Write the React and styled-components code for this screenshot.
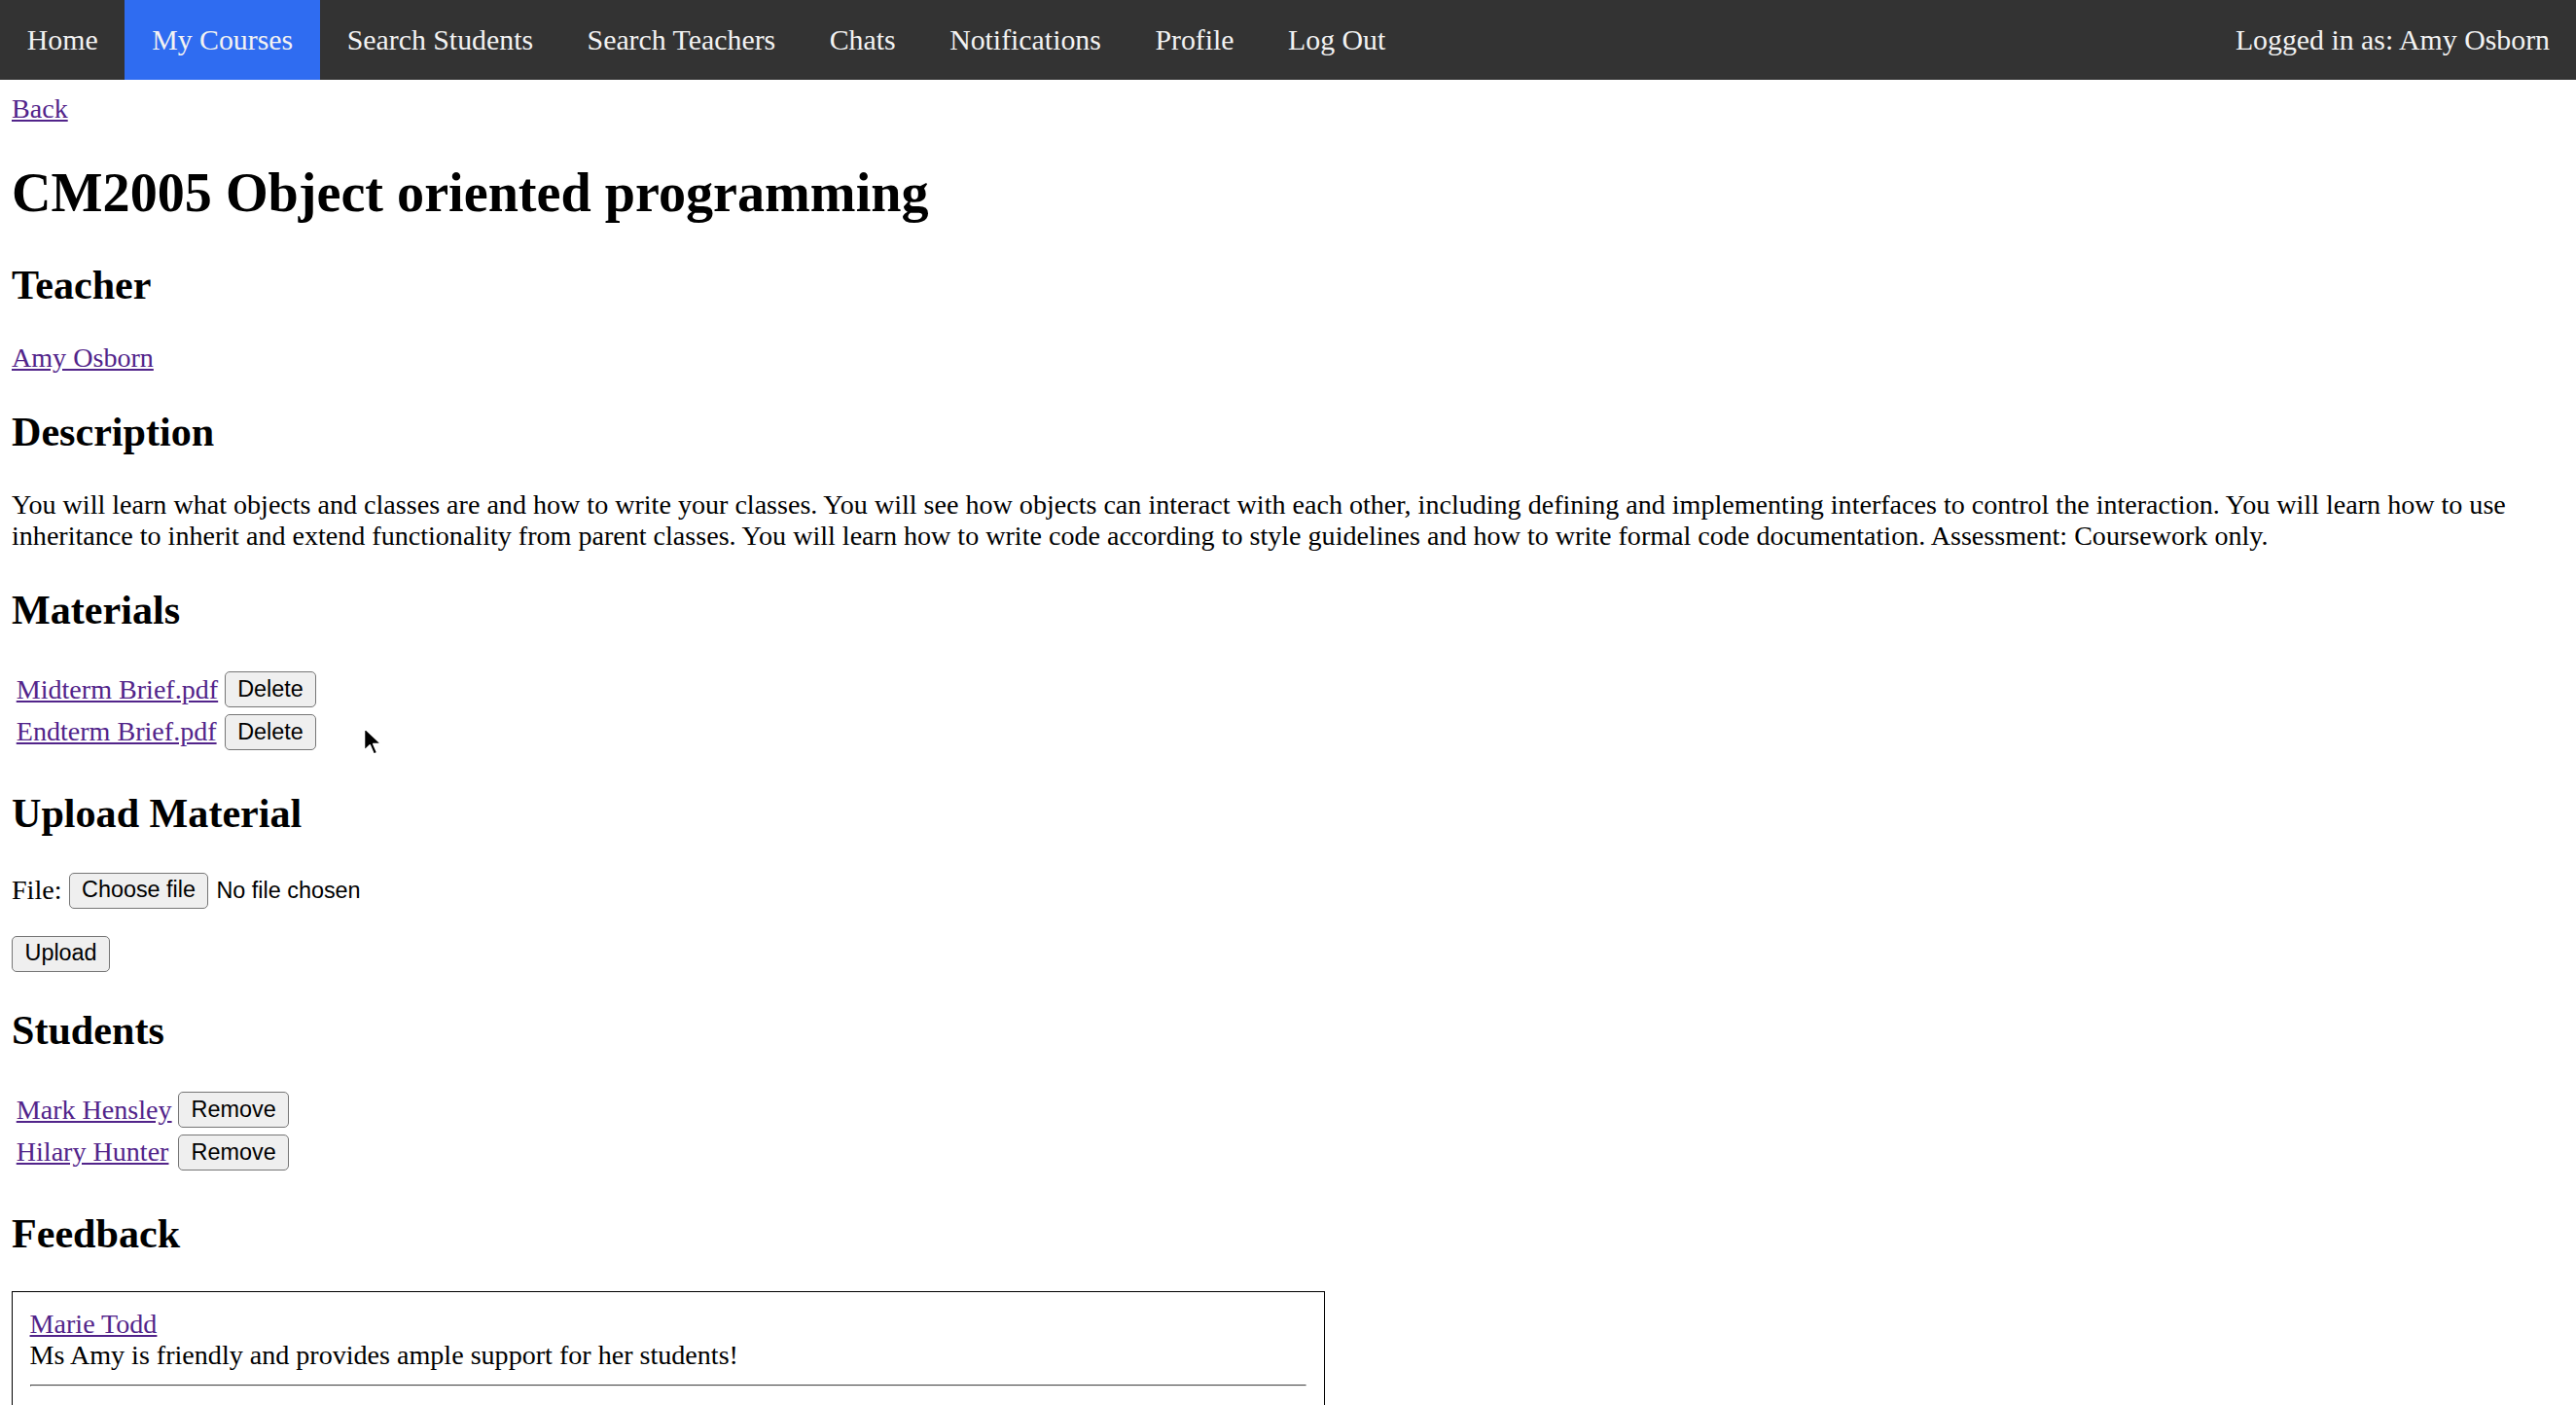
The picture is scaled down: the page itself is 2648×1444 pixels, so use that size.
import React from "react";
import styled, { createGlobalStyle } from "styled-components";

const S = 1.755;
const u = (n) => `${+(n * S).toFixed(2)}px`;

const GlobalStyle = createGlobalStyle`
  html, body { margin: 0; padding: 0; background: #fff; }
  body {
    font-family: "Liberation Serif", "Times New Roman", serif;
    font-size: ${u(16)};
    color: #000;
  }
`;

const Page = styled.div`
  position: relative;
  min-height: 100vh;
`;

const TopNav = styled.nav`
  display: flex;
  align-items: stretch;
  background: #333;
`;

const NavItem = styled.a`
  display: block;
  padding: ${u(13.8)} 27.75px;
  font-size: ${u(17)};
  color: #f2f2f2;
  text-decoration: none;
  background: ${(p) => (p.$active ? "#2f6cf1" : "transparent")};
`;

const UserInfo = styled.span`
  margin-left: auto;
  padding: ${u(13.8)} 27px;
  font-size: ${u(17)};
  color: #f2f2f2;
`;

const Main = styled.main`
  padding: ${u(8)} 12px;
`;

const Link = styled.a`
  color: #52248a;
  text-decoration: underline;
  cursor: pointer;
`;

const BlockLink = styled(Link)`
  display: block;
`;

const Title = styled.h1`
  font-size: ${u(32)};
  font-weight: bold;
  margin: ${u(21.44)} 0;
`;

const SectionTitle = styled.h2`
  font-size: ${u(24)};
  font-weight: bold;
  margin: ${u(19.92)} 0;
`;

const Para = styled.p`
  margin: ${u(16)} 0;
`;

const FileRow = styled(Para)`
  padding-top: 2px;
`;

const ItemTable = styled.table`
  border-collapse: separate;
  border-spacing: ${u(2)};
`;

const Cell = styled.td`
  padding: ${u(1)};
  vertical-align: middle;
`;

const buttonLook = `
  box-sizing: border-box;
  height: 37px;
  font-family: "Liberation Sans", Arial, Helvetica, sans-serif;
  font-size: ${u(13.33)};
  line-height: 1;
  padding: 0 12.5px;
  border: 1.75px solid #767676;
  border-radius: 5px;
  background: #efefef;
  color: #000;
`;

const Button = styled.button`
  ${buttonLook}
  margin: 0;
  vertical-align: middle;
`;

const FileLabel = styled.label`
  display: inline-flex;
  align-items: center;
  font-size: ${u(16)};
`;

const HiddenInput = styled.input`
  display: none;
`;

const ChooseButton = styled.span`
  ${buttonLook}
  display: inline-flex;
  align-items: center;
  margin: 0 8px 0 0;
`;

const FileStatus = styled.span`
  font-family: "Liberation Sans", Arial, Helvetica, sans-serif;
  font-size: ${u(13.33)};
`;

const LabelText = styled.span`
  margin-right: ${u(4)};
`;

const FeedbackCard = styled.div`
  width: ${u(748)};
  padding: ${u(10)};
  border: ${u(1)} solid #000;
`;

const Divider = styled.hr`
  margin: ${u(8)} 0;
  border: ${u(1)} inset #eee;
  border-top-color: #9a9a9a;
  border-left-color: #9a9a9a;
  height: 0;
`;

const Cursor = styled.svg`
  position: absolute;
  left: 372px;
  top: 746px;
  width: 24px;
  height: 34px;
  pointer-events: none;
`;

const navItems = [
  "Home",
  "My Courses",
  "Search Students",
  "Search Teachers",
  "Chats",
  "Notifications",
  "Profile",
  "Log Out",
];

const materials = ["Midterm Brief.pdf", "Endterm Brief.pdf"];
const students = ["Mark Hensley", "Hilary Hunter"];

export default function App() {
  return (
    <Page>
      <GlobalStyle />
      <TopNav>
        {navItems.map((n) => (
          <NavItem key={n} href="#" $active={n === "My Courses"}>
            {n}
          </NavItem>
        ))}
        <UserInfo>Logged in as: Amy Osborn</UserInfo>
      </TopNav>
      <Main>
        <Link href="#">Back</Link>
        <Title>CM2005 Object oriented programming</Title>

        <SectionTitle>Teacher</SectionTitle>
        <Para>
          <Link href="#">Amy Osborn</Link>
        </Para>

        <SectionTitle>Description</SectionTitle>
        <Para>
          You will learn what objects and classes are and how to write your classes. You will see
          how objects can interact with each other, including defining and implementing interfaces
          to control the interaction. You will learn how to use inheritance to inherit and extend
          functionality from parent classes. You will learn how to write code according to style
          guidelines and how to write formal code documentation. Assessment: Coursework only.
        </Para>

        <SectionTitle>Materials</SectionTitle>
        <ItemTable>
          <tbody>
            {materials.map((m) => (
              <tr key={m}>
                <Cell>
                  <Link href="#">{m}</Link>
                </Cell>
                <Cell>
                  <Button type="button">Delete</Button>
                </Cell>
              </tr>
            ))}
          </tbody>
        </ItemTable>

        <SectionTitle>Upload Material</SectionTitle>
        <form onSubmit={(e) => e.preventDefault()}>
          <FileRow>
            <FileLabel>
              <LabelText>File:</LabelText>
              <HiddenInput type="file" />
              <ChooseButton>Choose file</ChooseButton>
              <FileStatus>No file chosen</FileStatus>
            </FileLabel>
          </FileRow>
          <Para>
            <Button type="submit">Upload</Button>
          </Para>
        </form>

        <SectionTitle>Students</SectionTitle>
        <ItemTable>
          <tbody>
            {students.map((s) => (
              <tr key={s}>
                <Cell>
                  <Link href="#">{s}</Link>
                </Cell>
                <Cell>
                  <Button type="button">Remove</Button>
                </Cell>
              </tr>
            ))}
          </tbody>
        </ItemTable>

        <SectionTitle>Feedback</SectionTitle>
        <FeedbackCard>
          <BlockLink href="#">Marie Todd</BlockLink>
          Ms Amy is friendly and provides ample support for her students!
          <Divider />
        </FeedbackCard>
      </Main>
      <Cursor viewBox="0 0 22 32">
        <path
          d="M2 2 L2 24 L7.5 18.8 L11.2 27.5 L14.6 26 L10.9 17.5 L18.5 17.5 Z"
          fill="#000"
          stroke="#fff"
          strokeWidth="1.6"
          strokeLinejoin="round"
        />
      </Cursor>
    </Page>
  );
}
